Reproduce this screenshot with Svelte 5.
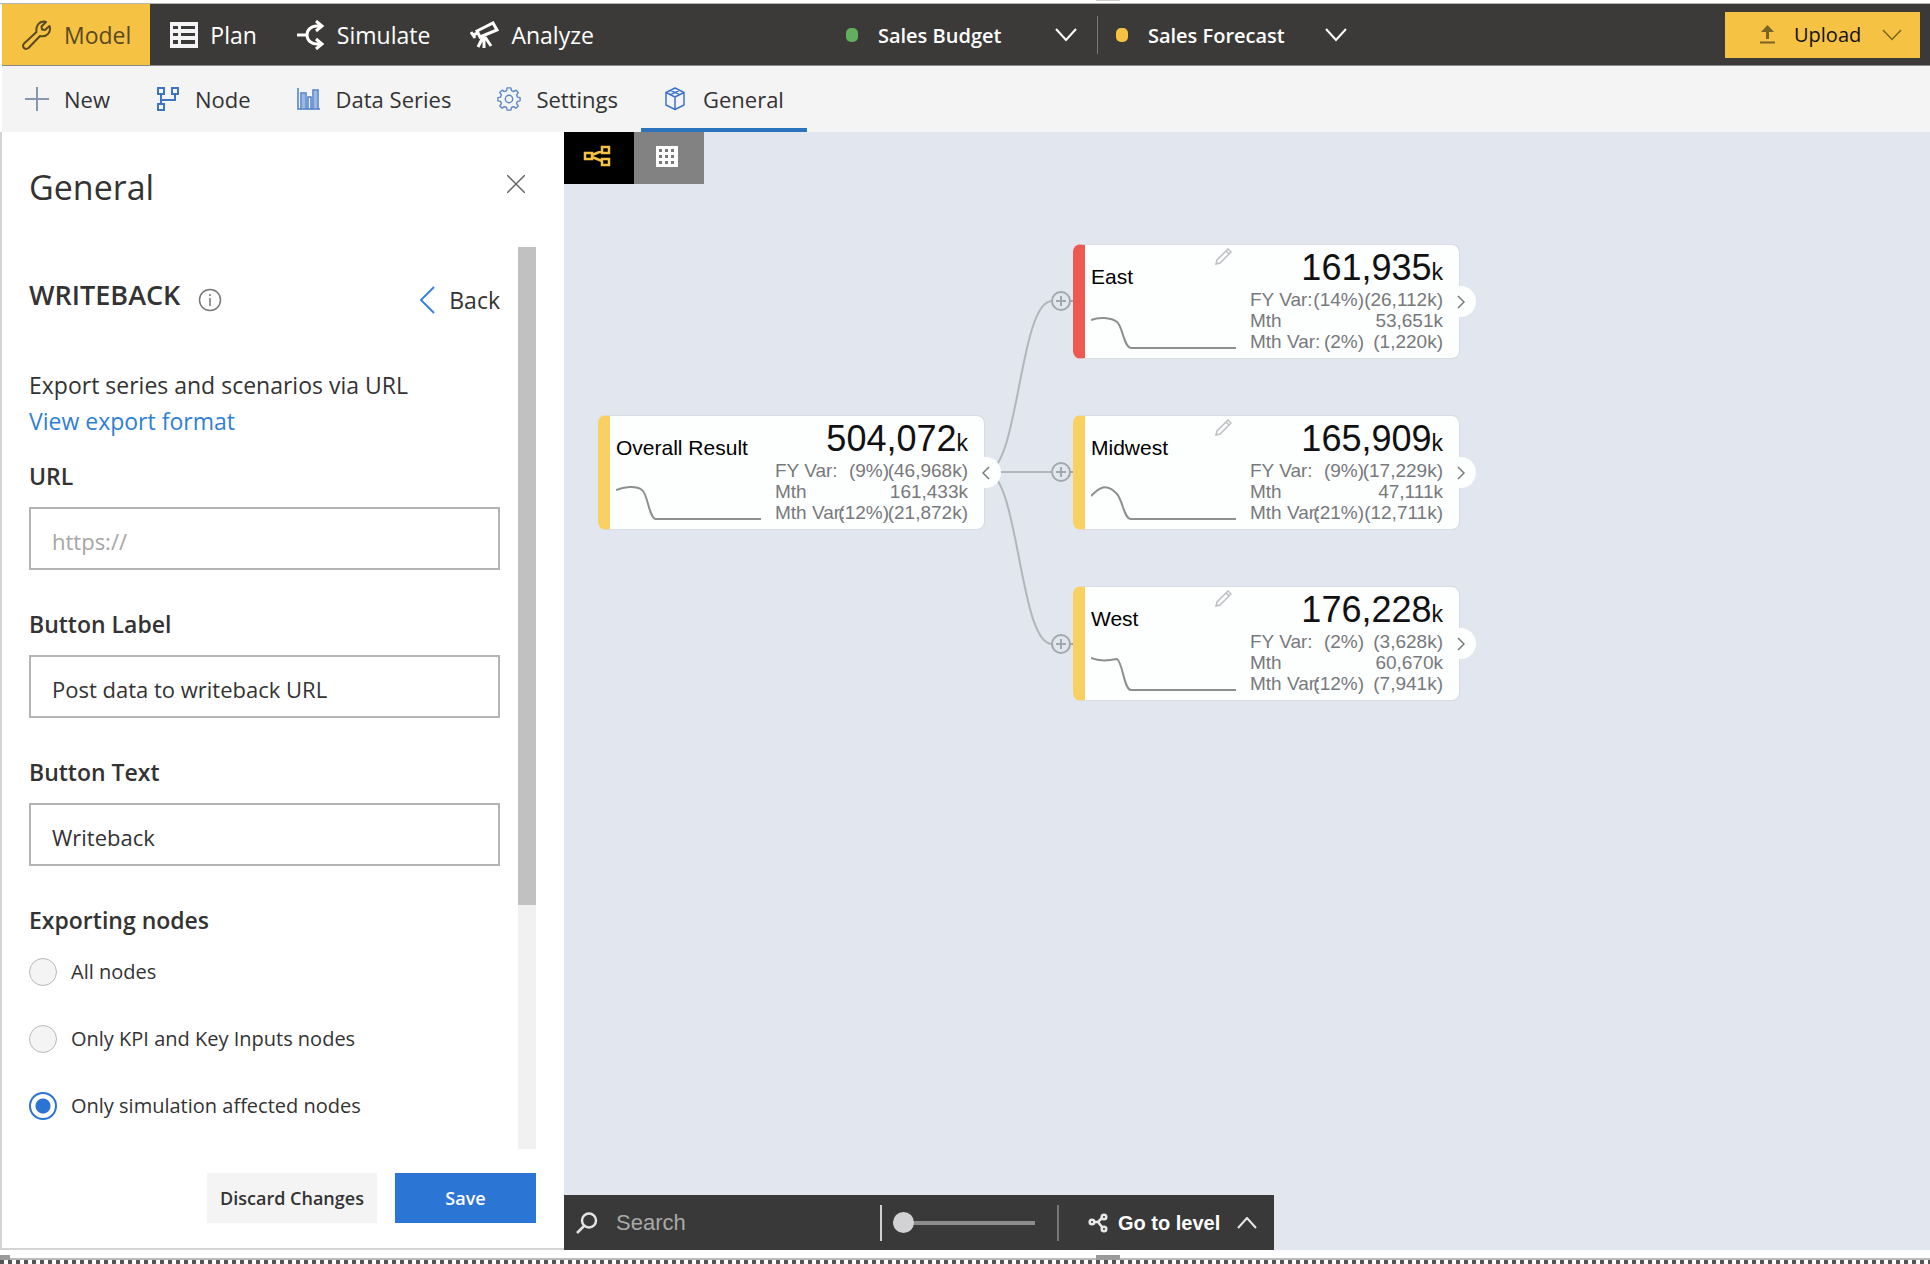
<script>
  const tabs = [
    { label: 'Model', icon: 'wrench', active: true },
    { label: 'Plan', icon: 'plan' },
    { label: 'Simulate', icon: 'simulate' },
    { label: 'Analyze', icon: 'telescope' }
  ];
  const tools = [
    { label: 'New', icon: 'plus' },
    { label: 'Node', icon: 'node' },
    { label: 'Data Series', icon: 'series' },
    { label: 'Settings', icon: 'gear' },
    { label: 'General', icon: 'cube', active: true }
  ];
  const scenarios = [
    { name: 'Sales Budget', tone: 'green' },
    { name: 'Sales Forecast', tone: 'amber' }
  ];
  const exportOptions = ['All nodes', 'Only KPI and Key Inputs nodes', 'Only simulation affected nodes'];
  const nodes = [
    { name: 'Overall Result', total: '504,072', x: 34, y: 231, root: true, tone: 'amber',
      rows: [['FY Var:', '(9%)', '(46,968k)'], ['Mth', '', '161,433k'], ['Mth Var:', '(12%)', '(21,872k)']],
      line: 'M0 5C7 2 20 0 26 5C32 9 33 34 40 34H145' },
    { name: 'East', total: '161,935', x: 509, y: 60, tone: 'red',
      rows: [['FY Var:', '(14%)', '(26,112k)'], ['Mth', '', '53,651k'], ['Mth Var:', '(2%)', '(1,220k)']],
      line: 'M0 6C7 3 20 3 26 8C32 13 33 34 40 34H145' },
    { name: 'Midwest', total: '165,909', x: 509, y: 231, tone: 'amber',
      rows: [['FY Var:', '(9%)', '(17,229k)'], ['Mth', '', '47,111k'], ['Mth Var:', '(21%)', '(12,711k)']],
      line: 'M0 11C8 3 15 -3 26 9C32 16 33 34 40 34H145' },
    { name: 'West', total: '176,228', x: 509, y: 402, tone: 'amber',
      rows: [['FY Var:', '(2%)', '(3,628k)'], ['Mth', '', '60,670k'], ['Mth Var:', '(12%)', '(7,941k)']],
      line: 'M0 2C7 5 16 5 26 3C32 7 33 34 40 34H145' }
  ];

  let scenarioValues = $state(['Sales Budget', 'Sales Forecast']);
  let url = $state('');
  let buttonLabel = $state('Post data to writeback URL');
  let buttonText = $state('Writeback');
  let exporting = $state('Only simulation affected nodes');
  let query = $state('');
  let zoom = $state(0);
</script>

{#snippet icon(name)}
  {#if name === 'wrench'}
    <svg width="31" height="32" viewBox="0 0 31 32" fill="none" stroke="#5a4a22" stroke-width="2" stroke-linejoin="round"><path d="M3 24.500L15.500 13C14.500 7 18 2.500 23 2.500L25 3L20.500 7.500L21 10.500L24 11L28.500 7C30.500 13 26 18.500 19 17L7.500 29C4 31.500 .5 28 3 24.500Z" /></svg>
  {:else if name === 'plan'}
    <svg width="28" height="26" viewBox="0 0 28 26"><path fill="#f4f4f6" fill-rule="evenodd" d="M0 0H28V26H0ZM3 4V7H8V4ZM11 4V7H25V4ZM3 11V14H8V11ZM11 11V14H25V11ZM3 18V22H8V18ZM11 18V22H25V18Z" /></svg>
  {:else if name === 'simulate'}
    <svg width="28" height="30" viewBox="0 0 28 30" fill="none" stroke="#fff" stroke-width="3"><path d="M0 15H9M25 6H20C14 6 10 10 10 15S14 24 20 24H25M19 1L25 6L19 11M19 19L25 24L19 29" /></svg>
  {:else if name === 'telescope'}
    <svg width="29" height="28" viewBox="0 0 29 28" fill="none" stroke="#fff" stroke-width="3"><path d="M7 10L23 2L27 9L10 16ZM1 11L5 17M3 14L8 12M13 16L8 26M14 16V27M15 16L21 25" /></svg>
  {:else if name === 'plus'}
    <svg width="24" height="24" viewBox="0 0 24 24" stroke="#8797ad" stroke-width="2"><path d="M12 0V24M0 12H24" /></svg>
  {:else if name === 'node'}
    <svg width="24" height="24" viewBox="0 0 24 24" fill="none" stroke="#3f74c4" stroke-width="2"><path d="M2 1H8V7H2ZM16 1H22V7H16ZM2 17H8V23H2ZM5 7V17M5 13H19V7" /></svg>
  {:else if name === 'series'}
    <svg width="24" height="22" viewBox="0 0 24 22" fill="none" stroke="#4a7cc7" stroke-width="1.500"><path d="M1 0V21H23M4 21V5H9V21M11 21V9H14V21M16 21V2H21V21" /><path fill="#9db8e0" stroke="none" d="M5 6H8V20H5ZM17 3H20V20H17Z" /></svg>
  {:else if name === 'gear'}
    <svg width="24" height="24" viewBox="0 0 26 26" fill="none" stroke="#5d86c6" stroke-width="1.500" stroke-linejoin="round"><path d="M11 1H15L15.700 4L18 5L20.500 3.400L23 6L21.200 8.500L22.200 11L25 11.500V15L22.200 15.500L21.200 18L23 20.500L20.500 23L18 21.200L15.700 22.200L15 25H11L10.300 22.200L8 21.200L5.500 23L3 20.500L4.800 18L3.800 15.500L1 15V11.500L3.800 11L4.800 8.500L3 6L5.500 3.400L8 5L10.300 4Z" /><circle cx="13" cy="13" r="4" /></svg>
  {:else if name === 'cube'}
    <svg width="24" height="24" viewBox="0 0 24 24" fill="none" stroke="#3f74c4" stroke-width="1.500" stroke-linejoin="round"><path d="M11 1L20 5.500V18L11 22.500L2 18V5.500ZM2 5.500L11 10L20 5.500M11 10V22.500M6.500 3.300L15.500 7.700M15.500 3.300L6.500 7.700" /></svg>
  {:else if name === 'chevron'}
    <svg width="22" height="14" viewBox="0 0 22 14" fill="none" stroke="currentColor" stroke-width="2"><path d="M1 1L11 12L21 1" /></svg>
  {/if}
{/snippet}

<div class="app">
  <div class="rim top"><span class="grip middle"></span></div>

  <header>
    <nav class="tabs" aria-label="Workspace">
      {#each tabs as tab}
        <button class="tab" class:active={tab.active}>{@render icon(tab.icon)}{tab.label}</button>
      {/each}
    </nav>
    <div class="scenarios">
      {#each scenarios as scenario, i}
        <div class="scenario">
          <span class="dot {scenario.tone}"></span>
          <span class="picker">
            <select aria-label="Scenario {i + 1}" bind:value={scenarioValues[i]}>
              {#each scenarios as option}<option>{option.name}</option>{/each}
            </select>
            {@render icon('chevron')}
          </span>
        </div>
      {/each}
    </div>
    <button class="upload">
      <svg width="15" height="19" viewBox="0 0 15 19" fill="#7b6327"><path d="M7.500 0L14 7H9V14H6V7H1ZM0 16.500H15V18.500H0Z" /></svg>
      Upload
      <svg class="caret" width="20" height="12" viewBox="0 0 20 12" fill="none" stroke="#7b6327" stroke-width="1.500"><path d="M1 1L10 10.500L19 1" /></svg>
    </button>
  </header>

  <nav class="tools" aria-label="Model tools">
    {#each tools as tool}
      <button class="tool" class:active={tool.active}>{@render icon(tool.icon)}{tool.label}</button>
    {/each}
  </nav>

  <main>
    <aside>
      <div class="panel-head">
        <h1>General</h1>
        <button class="close" aria-label="Close">
          <svg width="18" height="18" viewBox="0 0 18 18" stroke="#666" stroke-width="1.500"><path d="M0 0L18 18M18 0L0 18" /></svg>
        </button>
      </div>
      <div class="panel-body">
        <form id="writeback">
          <div class="section">
            <h2>WRITEBACK</h2>
            <svg width="24" height="24" viewBox="0 0 24 24" fill="none" stroke="#777" stroke-width="1.500"><circle cx="12" cy="12" r="10.500" /><path d="M12 10V18M12 6V8" /></svg>
            <button type="button" class="back">
              <svg width="16" height="28" viewBox="0 0 16 28" fill="none" stroke="#3b82dc" stroke-width="2"><path d="M15 1L2 14L15 27" /></svg>
              Back
            </button>
          </div>
          <p>Export series and scenarios via URL</p>
          <a href="#format">View export format</a>
          <div class="field first">
            <label for="url">URL</label>
            <input id="url" type="text" placeholder="https://" bind:value={url} />
          </div>
          <div class="field">
            <label for="button-label">Button Label</label>
            <input id="button-label" type="text" bind:value={buttonLabel} />
          </div>
          <div class="field">
            <label for="button-text">Button Text</label>
            <input id="button-text" type="text" bind:value={buttonText} />
          </div>
          <fieldset>
            <legend>Exporting nodes</legend>
            {#each exportOptions as option}
              <label class="choice"><input type="radio" name="exporting" value={option} bind:group={exporting} />{option}</label>
            {/each}
          </fieldset>
        </form>
        <div class="track"><div class="thumb"></div></div>
      </div>
      <div class="actions">
        <button class="discard">Discard Changes</button>
        <button class="save" form="writeback">Save</button>
      </div>
    </aside>

    <section class="canvas">
      <div class="views">
        <button class="view dark" aria-label="Tree view">
          <svg width="28" height="22" viewBox="0 0 28 22" fill="none" stroke="#f3c144" stroke-width="2.500"><path d="M2 8H9V14H2ZM19 2H26V8H19ZM19 14H26V20H19ZM9 10L19 6M9 12L19 16" /></svg>
        </button>
        <button class="view" aria-label="Table view">
          <svg width="22" height="21" viewBox="0 0 22 21"><path fill="#fff" d="M0 0H22V21H0Z" /><path stroke="#777" stroke-width="3" stroke-dasharray="3 3" d="M3 4.500H19M3 10.500H19M3 16.500H19" /></svg>
        </button>
      </div>

      <div class="tree">
        <svg class="links" width="520" height="540" viewBox="0 0 520 540" fill="none" stroke="#b3b5ba" stroke-width="2">
          <path d="M422 288C455 288 455 117 488 117M422 288H488M422 288C455 288 455 460 488 460" />
          {#each [117, 288, 460] as y}
            <g stroke="#a5a7ab"><circle cx="497" cy={y} r="9" /><path d="M506 {y}H510M492 {y}H502M497 {y - 5}V{y + 5}" /></g>
          {/each}
        </svg>
        {#each nodes as node}
          <article class="card {node.tone}" style="left: {node.x}px; top: {node.y}px">
            <div class="summary">
              <h3>{node.name}</h3>
              <svg width="146" height="36" viewBox="0 0 146 36" fill="none" stroke="#8d8f90" stroke-width="2"><path d={node.line} /></svg>
            </div>
            {#if !node.root}
              <button class="edit" aria-label="Edit {node.name}">
                <svg width="17" height="17" viewBox="0 0 17 17" fill="none" stroke="#bfbfc3" stroke-width="1.500"><path d="M1 16L2 12L13 1L16 4L5 15ZM11 3L14 6" /></svg>
              </button>
            {/if}
            <div class="figures">
              <div class="total">{node.total}<small>k</small></div>
              <div class="rows">
                {#each node.rows as row}
                  {#each row as cell}<span>{cell}</span>{/each}
                {/each}
              </div>
            </div>
            <button class="knob" aria-label="{node.root ? 'Collapse' : 'Expand'} {node.name}">
              <svg width="8" height="14" viewBox="0 0 8 14" fill="none" stroke="#77797b" stroke-width="1.500"><path d={node.root ? 'M7 1L1 7L7 13' : 'M1 1L7 7L1 13'} /></svg>
            </button>
          </article>
        {/each}
      </div>

      <div class="dock">
        <svg width="22" height="22" viewBox="0 0 22 22" fill="none" stroke="#e4e4e4" stroke-width="2.500"><circle cx="13" cy="8.500" r="7" /><path d="M8 14L1 21" /></svg>
        <input class="search" type="text" placeholder="Search" aria-label="Search" bind:value={query} />
        <span class="bar"></span>
        <input class="slider" type="range" min="0" max="100" aria-label="Zoom" bind:value={zoom} />
        <span class="bar dim"></span>
        <button class="level">
          <svg width="20" height="20" viewBox="0 0 20 20" fill="none" stroke="#e8e8e8" stroke-width="2.500"><circle cx="4" cy="9" r="2.300" /><circle cx="16" cy="4" r="2.300" /><circle cx="16" cy="16" r="2.300" /><path d="M6 9H10L14 5M10 9L14 14" /></svg>
          Go to level
          <svg class="up" width="20" height="12" viewBox="0 0 20 12" fill="none" stroke="#e8e8e8" stroke-width="2"><path d="M1 11L10 1L19 11" /></svg>
        </button>
      </div>
    </section>
  </main>

  <div class="rim bottom"><span class="grip"></span><span class="grip middle"></span></div>
</div>

<style>
  :global(body) { margin: 0; background: #fff; }
  * { box-sizing: border-box; }
  svg { flex: none; display: block; }
  button, input, select { font: inherit; color: inherit; border: 0; padding: 0; background: none; border-radius: 0; }
  button { cursor: pointer; }
  h1, h2, h3, p { margin: 0; }

  .app {
    display: flex;
    flex-direction: column;
    min-height: 100vh;
    font: 23px/36px "Open Sans", "Noto Sans", sans-serif;
    color: #333;
  }

  .rim { position: relative; flex: none; }
  .rim.top { height: 4px; border-bottom: 1px solid #b5b5b5; }
  .rim.bottom { height: 14px; padding-top: 8px; }
  .rim.bottom::after {
    content: "";
    display: block;
    height: 6px;
    border-top: 2px solid #b9b9b9;
    background: repeating-linear-gradient(90deg, #555 0 4px, #fff 4px 8px);
  }
  .grip { position: absolute; left: 0; width: 10px; height: 5px; top: 5px; background: #9a9a9a; }
  .grip.middle { left: calc(50% + 131px); width: 24px; }
  .top .grip { top: 0; height: 1px; background: #ccc; }

  header {
    display: grid;
    grid-template-columns: 44% 1fr auto;
    align-items: center;
    height: 62px;
    flex: none;
    background: #3b3a38;
    border-bottom: 1px solid #8a8a8a;
    margin-left: 2px;
    padding-right: 10px;
  }
  .tabs { display: flex; height: 100%; }
  .tab {
    display: flex;
    align-items: center;
    gap: 12px;
    padding: 0 20px;
    color: #fff;
    font-weight: 500;
    white-space: nowrap;
  }
  .tab.active { background: #f6c244; color: #5a4a22; font-weight: 400; padding: 0 19px; }
  .scenarios { display: flex; }
  .scenario { display: flex; align-items: center; gap: 20px; height: 38px; }
  .scenario + .scenario { border-left: 1px solid #777; margin-left: 20px; padding-left: 18px; }
  .dot { width: 12px; height: 14px; border-radius: 5px; }
  .dot.green { background: #62ae5c; }
  .dot.amber { background: #f6c244; }
  .picker { display: grid; align-items: center; width: 199px; color: #fff; }
  .picker > :global(*) { grid-area: 1 / 1; }
  .picker > :global(svg) { justify-self: end; pointer-events: none; }
  select { appearance: none; font-size: 20px; font-weight: 600; width: 100%; padding-top: 2px; }
  option { color: #333; }
  .upload {
    display: flex;
    align-items: center;
    width: 195px;
    height: 46px;
    padding: 0 18px 0 35px;
    gap: 19px;
    background: #f6c244;
    color: #111;
    font-size: 20px;
    font-weight: 500;
  }
  .caret { margin-left: auto; }

  .tools { display: flex; height: 66px; flex: none; margin-left: 2px; background: #f4f4f4; font-size: 22px; }
  .tool {
    display: flex;
    align-items: center;
    gap: 15px;
    padding: 3px 23px 0;
    border-bottom: 4px solid transparent;
    white-space: nowrap;
  }
  .tool.active { border-color: #2b73bd; }

  main { display: flex; flex: 1; }
  aside {
    display: flex;
    flex-direction: column;
    width: 564px;
    flex: none;
    padding: 0 28px 0 27px;
    border: 2px solid #d4d4d4;
    border-width: 0 0 2px 2px;
  }
  .panel-head { display: flex; justify-content: space-between; align-items: center; height: 115px; padding: 0 11px 6px 0; }
  h1 { font-size: 34px; font-weight: 400; line-height: 48px; }
  .close { margin-bottom: 6px; }
  .panel-body { display: flex; flex: 1; gap: 18px; }
  form { flex: 1; padding-top: 35px; }
  .section { display: flex; align-items: center; gap: 18px; height: 36px; margin-bottom: 49px; }
  h2 { align-self: flex-start; font-size: 27px; line-height: 26px; font-weight: 600; }
  .back { display: flex; align-items: center; gap: 14px; margin-left: auto; }
  a { display: block; color: #2f7fd6; text-decoration: none; }
  .field { margin-top: 36px; }
  .field.first { margin-top: 19px; }
  .field label, legend { display: block; font-weight: 600; padding: 0; }
  .field input {
    width: 100%;
    height: 63px;
    margin-top: 13px;
    padding: 5px 21px 0;
    border: 2px solid #b4b4b4;
    font-size: 22px;
    display: block;
  }
  .field input::placeholder { color: #a6a6a6; }
  fieldset { border: 0; margin: 36px 0 0; padding: 0; }
  .choice { display: flex; align-items: center; gap: 14px; height: 67px; font-size: 20px; }
  .choice input {
    appearance: none;
    width: 28px;
    height: 28px;
    margin: 0;
    border: 1px solid #b9b9b9;
    border-radius: 50%;
    background: #f4f4f4;
  }
  .choice input:checked { border: 2px solid #2b74d4; background: radial-gradient(circle, #2b74d4 7px, #fff 8px); }
  .track { width: 18px; background: #f1f1f1; }
  .thumb { height: 73%; background: #c1c1c1; }
  .actions { display: flex; justify-content: flex-end; gap: 18px; padding: 24px 0 25px; }
  .actions button { height: 50px; font-size: 18px; font-weight: 600; }
  .discard { width: 170px; background: #f4f4f4; }
  .actions .save { width: 141px; background: #2b76d4; color: #fff; }

  .canvas { display: flex; flex-direction: column; flex: 1; min-width: 0; background: #e2e6ee; font-family: "Liberation Sans", Arial, sans-serif; }
  .views { display: flex; }
  .view { display: flex; justify-content: center; align-items: center; width: 70px; height: 52px; padding: 0 4px 4px 0; background: #828282; }
  .view.dark { background: #000; }
  .tree { position: relative; flex: 1; }
  .links { position: absolute; left: 0; top: 0; }
  .card {
    position: absolute;
    display: flex;
    width: 387px;
    height: 115px;
    padding: 0 16px 0 6px;
    border: 1px solid #d9dce2;
    border-left: 12px solid #f9d162;
    border-radius: 8px;
    background: #fdfefe;
    background-clip: padding-box;
  }
  .card.red { border-left-color: #ec5a51; }
  .summary { display: flex; flex-direction: column; justify-content: space-between; width: 159px; padding: 20px 0 8px; }
  h3 { font-size: 21px; font-weight: 400; line-height: 24px; color: #000; white-space: nowrap; }
  .total { font-size: 36px; line-height: 46px; height: 44px; text-align: right; color: #111; }
  .total small { font-size: 23px; }
  .rows { display: grid; grid-template-columns: 72px 42px 79px; font-size: 19px; line-height: 21px; color: #77797c; }
  .rows span { white-space: nowrap; }
  .rows span:not(:nth-child(3n + 1)) { justify-self: end; }
  .edit { position: absolute; left: 130px; top: 3px; }
  .knob {
    position: absolute;
    right: -17px;
    top: 41px;
    display: flex;
    justify-content: center;
    align-items: center;
    width: 31px;
    height: 31px;
    border-radius: 50%;
    background: #fdfefe;
  }

  .dock { display: flex; align-items: center; align-self: flex-start; width: 710px; height: 55px; padding: 0 17px 0 12px; background: #383938; }
  .search { width: 264px; margin-left: 18px; color: #ddd; font-size: 22px; }
  .search::placeholder { color: #a9a9a9; }
  .bar { width: 2px; height: 36px; background: #d0d0d0; }
  .bar.dim { background: #777; }
  .slider { appearance: none; width: 142px; height: 22px; margin: 0 22px 0 11px; background: linear-gradient(#8c8c8c, #8c8c8c) center / 100% 4px no-repeat; }
  .slider::-webkit-slider-thumb { appearance: none; width: 21px; height: 21px; border-radius: 50%; background: #d2d2d4; }
  .level { display: flex; flex: 1; align-items: center; gap: 10px; margin-left: 29px; color: #fff; font-size: 20px; font-weight: 700; white-space: nowrap; }
  .up { margin-left: auto; }
</style>
